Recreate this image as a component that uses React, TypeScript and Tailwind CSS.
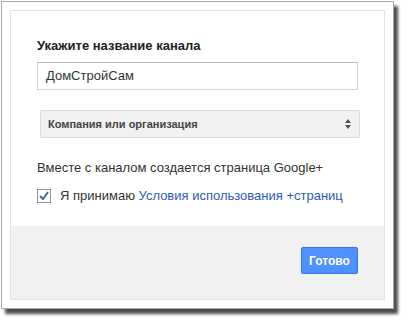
import React from "react";

export default function App() {
  return (
    <div className="h-[325px] w-[409px] bg-white font-['Liberation_Sans',Arial,sans-serif]">
      {/* outer frame with drop shadow */}
      <div className="ml-px mt-px h-[308px] w-[393px] border border-[#a8a8a8] bg-white p-[8px] shadow-[4px_5px_3px_rgba(0,0,0,0.7)]">
        <div className="flex h-full flex-col border border-[#e4e4e4]">
          {/* body */}
          <div className="h-[215px] pl-[26px] pt-[27px] text-[#222]">
            <div className="text-[13px] font-bold leading-4">Укажите название канала</div>

            <div className="mt-[8px] flex h-[28px] w-[321px] items-center border border-[#d4d4d4] border-t-[#bdbdbd] pl-[8px] text-[13px] text-[#333]">
              ДомСтройСам
            </div>

            <div className="ml-[3px] mt-[20px] flex h-[28px] w-[320px] items-center justify-between border border-[#dcdcdc] bg-[#f1f1f1] pl-[7px] pr-[7px]">
              <span className="text-[11px] font-bold text-[#444]">Компания или организация</span>
              <svg width="8" height="12" viewBox="0 0 8 12">
                <path d="M4 1 L7 5 L1 5 Z" fill="#555" />
                <path d="M4 11 L7 7 L1 7 Z" fill="#555" />
              </svg>
            </div>

            <div className="mt-[22px] text-[13px] leading-4 text-[#333]">
              Вместе с каналом создается страница Google+
            </div>

            <div className="mt-[12px] flex items-center text-[13px] leading-4 text-[#333]">
              <svg width="14" height="14" viewBox="0 0 14 14" className="mr-[9px]">
                <rect x="0.5" y="0.5" width="13" height="13" fill="#fff" stroke="#8d96a8" />
                <path d="M3 7 L6 10 L11 3" fill="none" stroke="#3a5ea0" strokeWidth="1.8" />
              </svg>
              <span>Я принимаю&nbsp;</span>
              <span className="text-[#2f5bb7]">Условия использования +страниц</span>
            </div>
          </div>

          {/* footer */}
          <div className="flex flex-1 items-start justify-end bg-[#f1f1f1] pr-[26px] pt-[21px]">
            <div className="flex h-[27px] w-[57px] items-center justify-center rounded-[2px] border border-[#3079ed] bg-[#4d90fe] text-[12px] font-bold text-white">
              Готово
            </div>
          </div>
        </div>
      </div>
    </div>
  );
}
